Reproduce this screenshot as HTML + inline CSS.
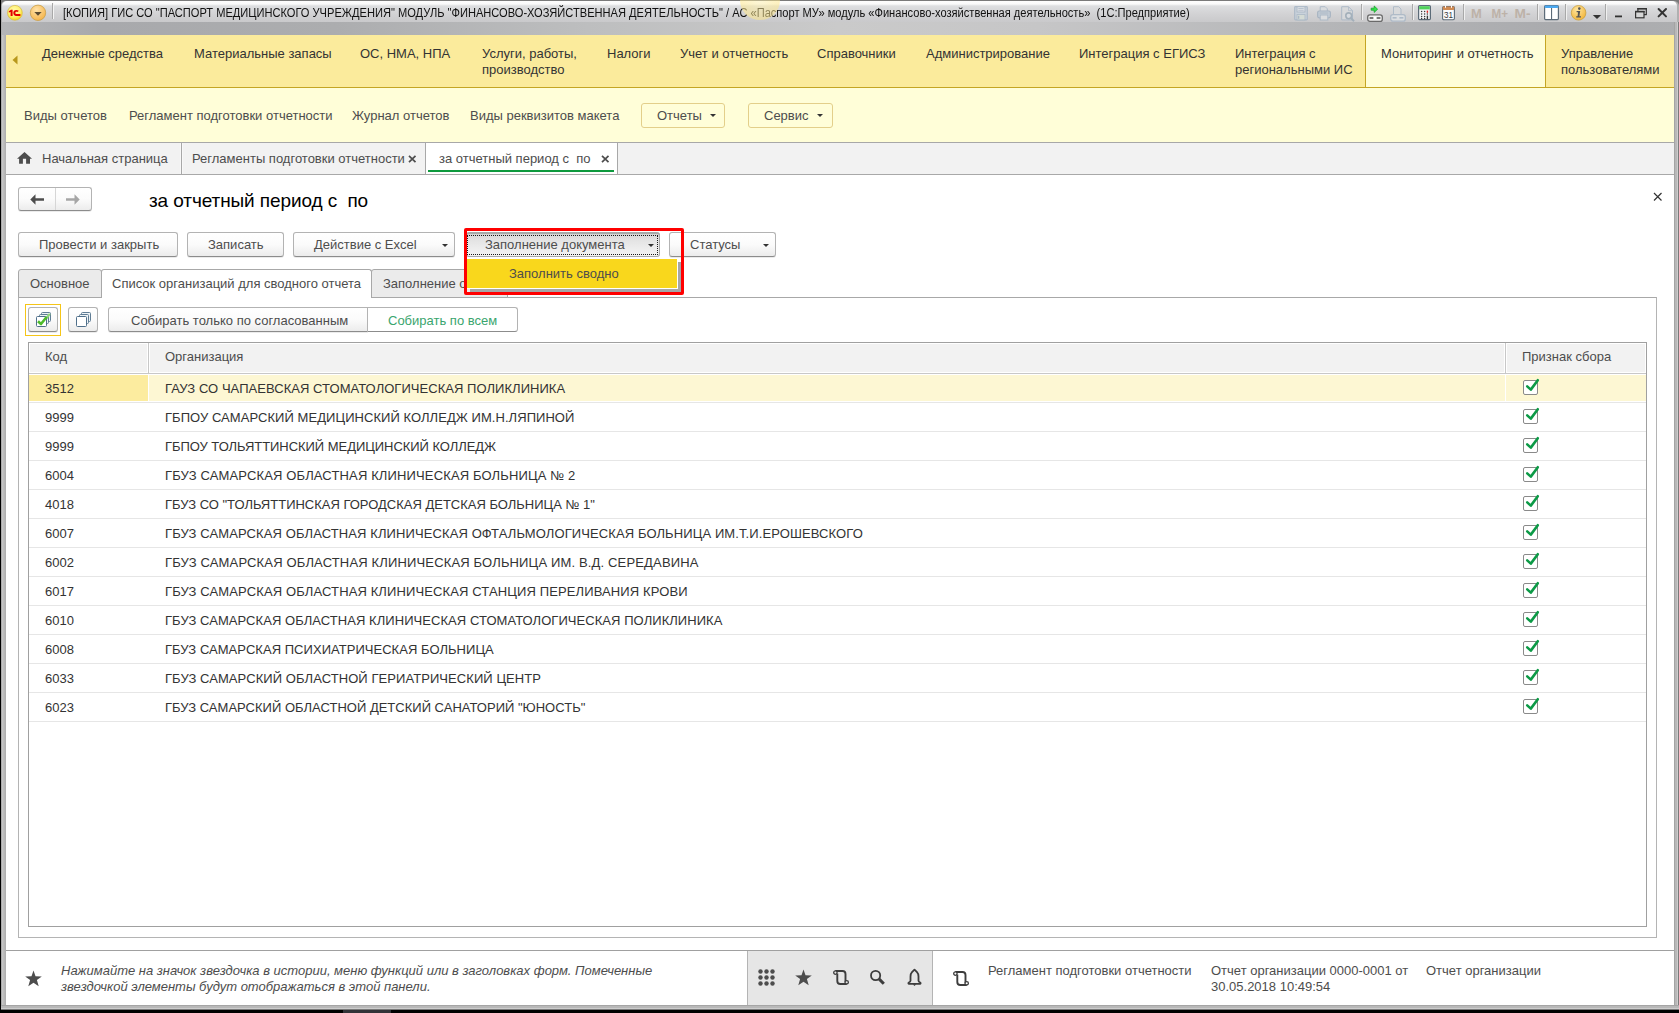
<!DOCTYPE html>
<html><head><meta charset="utf-8">
<style>
*{box-sizing:border-box}
html,body{margin:0;padding:0}
body{width:1679px;height:1013px;position:relative;overflow:hidden;background:#000;font-family:"Liberation Sans",sans-serif;font-size:13px;color:#4d4d4d}
.a{position:absolute}
.t{position:absolute;white-space:nowrap;font-size:13px;line-height:16px}
svg{position:absolute;overflow:visible}
#topline{left:1px;top:0;width:1678px;height:24px;background:#7a7a7a}
#frame{left:1px;top:1px;width:1678px;height:1008px;background:linear-gradient(90deg,#8a8a8a 0,#cdcdcd 1px,#bebebe 2px,#bebebe 3px,#b0b0b0 4px,#b0b0b0 5px);border-radius:5px 5px 0 0}
#frameR{left:1674px;top:22px;width:5px;height:987px;background:linear-gradient(90deg,#a4a4a4 0,#a4a4a4 1px,#b8b8b8 1px,#b8b8b8 3px,#cdcdcd 3px,#cdcdcd 4px,#7a7a7a 4px)}
#titlebar{left:2px;top:1px;width:1675px;height:21px;background:linear-gradient(#fdfdfd 0,#fafafa 3px,#dddee0 5px,#d4d4d6 55%,#c9c9cb 100%);border-radius:5px 5px 0 0}
#band{left:2px;top:22px;width:1672px;height:13px;background:linear-gradient(90deg,#b4b5b7 0,#a8a9ac 6%,#acadaf 20%,#bdbebf 35%,#cacaca 50%,#c6c6c7 62%,#b6b7b9 78%,#a9aaad 94%,#adaeb0 100%)}
#bottomframe{left:1px;top:1005px;width:1678px;height:5px;background:linear-gradient(#a5a5a5 0,#a5a5a5 1px,#b8b8b8 1px,#b8b8b8 3px,#cdcdcd 3px,#cdcdcd 4px,#7a7a7a 4px)}
#sections{left:6px;top:35px;width:1668px;height:53px;background:#fbeb9c;border-bottom:1px solid #c4a524}
#funcs{left:6px;top:88px;width:1668px;height:55px;background:#fffed8;border-bottom:1px solid #a8a8a8}
#tabs{left:6px;top:143px;width:1668px;height:32px;background:#f2f2f2;border-bottom:1px solid #a8a8a8}
#content{left:6px;top:175px;width:1668px;height:776px;background:#fff}
#footer{left:6px;top:950px;width:1668px;height:55px;background:#fff;border-top:1px solid #a0a0a0}
.sep{position:absolute;top:3px;width:2px;height:16px;border-left:1px solid #a8a8a8;border-right:1px solid #f4f4f4}
.sec{color:#333}
.fbtn{position:absolute;top:103px;height:25px;border:1px solid #e3cf8a;border-radius:3px;background:#fffed8}
.tri{position:absolute;width:0;height:0;border-left:3px solid transparent;border-right:3px solid transparent;border-top:3px solid #333}
.cb{position:absolute;width:15px;height:15px;border:1px solid #8a8a8a;border-radius:2px;background:#fff}
.r{color:#333}
.btn{position:absolute;height:25px;border:1px solid #b3b3b3;border-bottom-color:#8c8c8c;border-radius:3px;background:linear-gradient(#ffffff,#fbfbfb 50%,#ececec);box-shadow:0 1px 0 rgba(0,0,0,0.08)}
</style></head><body>
<div class="a" id="topline"></div>
<div class="a" id="frame"></div>
<div class="a" id="frameR"></div>
<div class="a" id="titlebar"></div>
<div class="a" id="band"></div>
<div class="a" id="bottomframe"></div>
<div class="a" id="sections"></div>
<div class="a" id="funcs"></div>
<div class="a" id="tabs"></div>
<div class="a" id="content"></div>
<div class="a" id="footer"></div>
<div class="a" style="left:343px;top:1010px;width:48px;height:3px;background:#323338"></div>

<!-- TITLEBAR -->
<svg style="left:0;top:0" width="60" height="26">
 <defs>
  <radialGradient id="g1c" cx="0.45" cy="0.35" r="0.7"><stop offset="0" stop-color="#fffbb0"/><stop offset="0.6" stop-color="#fff06a"/><stop offset="1" stop-color="#f3d200"/></radialGradient>
  <radialGradient id="gdd" cx="0.4" cy="0.3" r="0.75"><stop offset="0" stop-color="#ffe2a8"/><stop offset="1" stop-color="#f5b347"/></radialGradient>
 </defs>
 <circle cx="14.9" cy="12.8" r="7.4" fill="url(#g1c)" stroke="#d8bd52" stroke-width="0.8"/>
 <path d="M8.8 11.2 L11 9.8 L12.6 9.8 L12.6 15.9 L10.6 15.9 L10.6 12 L8.8 12.6 Z" fill="#e30000"/>
 <path d="M18.6 10.6 C16.2 9.3 13.2 10 13.3 12.9 C13.4 15.2 15.3 16 17.3 16 L20.4 16 L20.4 14.1 L16.8 14.1 C15.8 14.1 15.3 13.6 15.3 12.9 C15.3 11.6 16.8 11.3 18 12.1 Z" fill="#e30000"/>
 <circle cx="38" cy="12.8" r="7.7" fill="url(#gdd)" stroke="#c9a04c" stroke-width="0.8"/>
 <path d="M34.3 11.9 L41.7 11.9 L38 15.8 Z" fill="#5a4a30"/>
</svg>
<div class="sep" style="left:52px"></div>
<div class="t" style="left:63px;top:6px;font-size:12px;line-height:14px;color:#111;transform:scaleX(0.9245);transform-origin:0 0">[КОПИЯ] ГИС СО "ПАСПОРТ МЕДИЦИНСКОГО УЧРЕЖДЕНИЯ" МОДУЛЬ "ФИНАНСОВО-ХОЗЯЙСТВЕННАЯ ДЕЯТЕЛЬНОСТЬ" / АС «Паспорт МУ» модуль «Финансово-хозяйственная деятельность»&nbsp; (1С:Предприятие)</div>

<!-- TITLEBAR RIGHT ICONS -->
<svg style="left:1290px;top:3px" width="390" height="20">
 <!-- save -->
 <g transform="translate(4,3)" opacity="0.9">
  <rect x="0.7" y="0.7" width="12.6" height="13.2" rx="0.8" fill="#c9d2dc" stroke="#a9b7c6" stroke-width="1.2"/>
  <rect x="3" y="0.7" width="8" height="5.3" fill="#e1e4e8" stroke="#a9b7c6" stroke-width="1"/>
  <path d="M4.3 2.5 H9.7 M4.3 4.3 H9.7" stroke="#a9b7c6" stroke-width="0.8"/>
  <rect x="3" y="8.5" width="8" height="5.4" fill="#d5ddd6" stroke="#a9b7c6" stroke-width="0.8"/>
  <rect x="4" y="9.8" width="1.3" height="3" fill="#a9b7c6"/>
 </g>
 <!-- print -->
 <g transform="translate(27,3)" opacity="0.9">
  <path d="M3.2 5 V0.7 H8.2 L10.3 2.8 V5" fill="#dadde0" stroke="#a9b7c6" stroke-width="1"/>
  <rect x="0.7" y="5" width="12.6" height="6.8" rx="1.5" fill="#c4ced8" stroke="#a2b0bf" stroke-width="1.2"/>
  <path d="M2.5 7 H11.5" stroke="#a2b0bf" stroke-width="0.8"/>
  <rect x="3.2" y="9" width="7.6" height="5" fill="#dddfe1" stroke="#a9b7c6" stroke-width="1"/>
 </g>
 <!-- preview -->
 <g transform="translate(51,3)" opacity="0.9">
  <path d="M0.7 13.9 V0.7 H7.5 L11.5 4.7 V13.9 Z" fill="#d8dadc" stroke="#a9b7c6" stroke-width="1"/>
  <path d="M7.5 0.7 V4.7 H11.5" fill="none" stroke="#a9b7c6" stroke-width="0.8"/>
  <circle cx="7.7" cy="9.8" r="2.9" fill="#d8dde2" stroke="#9fadb8" stroke-width="1.6"/>
  <path d="M9.8 11.9 L13 15.2" stroke="#9fadb8" stroke-width="2"/>
 </g>
 <rect x="71" y="1" width="1" height="16" fill="#a8a8a8"/><rect x="72" y="1" width="1" height="16" fill="#f0f0f0"/>
 <!-- link green -->
 <g transform="translate(77,2)">
  <path d="M4.2 3.2 H7.2 V1 L10.6 4.2 L7.2 7.4 V5.2 H4.2 Z" fill="#2ee84a" stroke="#18a028" stroke-width="0.8" stroke-linejoin="round"/>
  <rect x="0.7" y="9.8" width="14.6" height="6.6" rx="2.2" fill="#f2f2f2" stroke="#6a6a6a" stroke-width="1.3"/>
  <rect x="2.6" y="12.2" width="4" height="1.6" fill="#5a5a5a"/>
  <rect x="9.4" y="12.2" width="4" height="1.6" fill="#5a5a5a"/>
  <rect x="6.6" y="11.6" width="2.8" height="2.6" fill="#fff"/>
 </g>
 <!-- link disabled -->
 <g transform="translate(100,3)" opacity="0.85">
  <path d="M3.5 8.5 V0.7 H8.7 L11 3 V8.5" fill="#d9dbdd" stroke="#a9b7c6" stroke-width="1"/>
  <rect x="0.7" y="8.6" width="14.6" height="6.6" rx="2.2" fill="#dfe2e5" stroke="#a9b7c6" stroke-width="1.3"/>
  <rect x="2.6" y="11" width="4" height="1.6" fill="#a9b7c6"/>
  <rect x="9.4" y="11" width="4" height="1.6" fill="#a9b7c6"/>
 </g>
 <rect x="122" y="1" width="1" height="16" fill="#a8a8a8"/><rect x="123" y="1" width="1" height="16" fill="#f0f0f0"/>
 <!-- calculator -->
 <g transform="translate(128,2)">
  <rect x="0.6" y="0.6" width="11.8" height="14" rx="1" fill="#f4f6f8" stroke="#5c6b78" stroke-width="1.2"/>
  <rect x="1.2" y="1.2" width="10.6" height="3.2" fill="#4fd25a"/>
  <g fill="#3a3a3a"><circle cx="3.6" cy="6.6" r="0.75"/><circle cx="6.6" cy="6.6" r="0.75"/><circle cx="3.6" cy="9" r="0.75"/><circle cx="6.6" cy="9" r="0.75"/><circle cx="9.4" cy="9" r="0.75"/><circle cx="3.6" cy="11.4" r="0.75"/><circle cx="6.6" cy="11.4" r="0.75"/><circle cx="3.6" cy="13.6" r="0.75"/><circle cx="6.6" cy="13.6" r="0.75"/><rect x="8.7" y="10.6" width="1.4" height="3.6"/></g>
  <rect x="8.7" y="5.6" width="1.4" height="2.2" fill="#e02020"/>
 </g>
 <!-- calendar -->
 <g transform="translate(152,2)">
  <rect x="0.6" y="1.6" width="11.8" height="13.2" rx="1.2" fill="#fbfcfd" stroke="#5c6b78" stroke-width="1.1"/>
  <rect x="0.6" y="1.6" width="11.8" height="3.4" rx="1" fill="#d08a52"/>
  <rect x="3" y="0.6" width="1" height="2.2" fill="#fff"/><rect x="9" y="0.6" width="1" height="2.2" fill="#fff"/>
  <text x="6.5" y="13.4" font-family="Liberation Sans" font-size="9.5" text-anchor="middle" fill="#3a3a3a" textLength="9" lengthAdjust="spacingAndGlyphs">31</text>
 </g>
 <rect x="173" y="1" width="1" height="16" fill="#a8a8a8"/><rect x="174" y="1" width="1" height="16" fill="#f0f0f0"/>
 <!-- M M+ M- -->
 <g fill="#bdb2a8" font-family="Liberation Sans" font-weight="bold" font-size="13">
  <text x="181" y="14.6">M</text>
  <text x="201.5" y="14.6" textLength="16.5" lengthAdjust="spacingAndGlyphs">M+</text>
  <text x="224.5" y="14.6" textLength="16" lengthAdjust="spacingAndGlyphs">M-</text>
 </g>
 <rect x="247" y="1" width="1" height="16" fill="#a8a8a8"/><rect x="248" y="1" width="1" height="16" fill="#f0f0f0"/>
 <!-- panel -->
 <g transform="translate(254,2)">
  <rect x="0.6" y="0.6" width="13.8" height="14" rx="1" fill="#fff" stroke="#5c6b78" stroke-width="1.2"/>
  <rect x="0.6" y="0.6" width="13.8" height="2.4" rx="1" fill="#4aa8f0"/>
  <rect x="7" y="3" width="1.1" height="11.6" fill="#5c6b78"/>
 </g>
 <rect x="275" y="1" width="1" height="16" fill="#a8a8a8"/><rect x="276" y="1" width="1" height="16" fill="#f0f0f0"/>
 <!-- info -->
 <defs><radialGradient id="ginf" cx="0.4" cy="0.3" r="0.8"><stop offset="0" stop-color="#ffe6a0"/><stop offset="1" stop-color="#f0b030"/></radialGradient></defs>
 <circle cx="288.6" cy="9.8" r="7.3" fill="url(#ginf)" stroke="#c9a040" stroke-width="0.8"/>
 <circle cx="289.3" cy="5.6" r="1.3" fill="#555"/>
 <path d="M286.6 8 H290.2 L289.4 13.2 H291 V14.4 H286.2 V13.2 H287.6 L288 9.2 H286.6 Z" fill="#555"/>
 <path d="M302.8 12 L311.2 12 L307 16 Z" fill="#333"/>
 <rect x="315" y="1" width="1" height="16" fill="#a8a8a8"/><rect x="316" y="1" width="1" height="16" fill="#f0f0f0"/>
 <!-- min / restore / close -->
 <rect x="325" y="12.5" width="7" height="1.8" fill="#333"/>
 <rect x="347.9" y="5.6" width="8.4" height="6" fill="none" stroke="#333" stroke-width="1.2"/>
 <rect x="345.6" y="8.5" width="8.4" height="6.3" fill="#d6d6d6" stroke="#333" stroke-width="1.2"/>
 <rect x="345" y="7.9" width="9.6" height="1.5" fill="#333"/>
 <rect x="347.3" y="5" width="9.6" height="1.5" fill="#333"/>
 <path d="M368.6 6 L376 13.4 M376 6 L368.6 13.4" stroke="#333" stroke-width="2" stroke-linecap="round"/>
</svg>
<div class="a" style="left:740px;top:-20px;width:40px;height:40px;border-radius:50%;background:radial-gradient(circle,rgba(255,240,170,0.45) 0,rgba(255,232,140,0.55) 70%,rgba(240,205,90,0.65) 100%)"></div>
<!-- SECTIONS -->
<svg style="left:12px;top:55px" width="6" height="10"><path d="M5.5 0.5 L0.5 5 L5.5 9.5 Z" fill="#b8981c"/></svg>
<div class="a" style="left:1365px;top:35px;width:181px;height:53px;background:#fffed8;border-left:1px solid #c4a524;border-right:1px solid #c4a524;border-bottom:1px solid #c4a524"></div>
<div class="t sec" style="left:42px;top:46px">Денежные средства</div>
<div class="t sec" style="left:194px;top:46px">Материальные запасы</div>
<div class="t sec" style="left:360px;top:46px">ОС, НМА, НПА</div>
<div class="t sec" style="left:482px;top:46px">Услуги, работы,<br>производство</div>
<div class="t sec" style="left:607px;top:46px">Налоги</div>
<div class="t sec" style="left:680px;top:46px">Учет и отчетность</div>
<div class="t sec" style="left:817px;top:46px">Справочники</div>
<div class="t sec" style="left:926px;top:46px">Администрирование</div>
<div class="t sec" style="left:1079px;top:46px">Интеграция с ЕГИСЗ</div>
<div class="t sec" style="left:1235px;top:46px">Интеграция с<br>региональными ИС</div>
<div class="t sec" style="left:1381px;top:46px">Мониторинг и отчетность</div>
<div class="t sec" style="left:1561px;top:46px">Управление<br>пользователями</div>

<!-- FUNCTIONS -->
<div class="t" style="left:24px;top:108px">Виды отчетов</div>
<div class="t" style="left:129px;top:108px">Регламент подготовки отчетности</div>
<div class="t" style="left:352px;top:108px">Журнал отчетов</div>
<div class="t" style="left:470px;top:108px">Виды реквизитов макета</div>
<div class="fbtn" style="left:641px;width:84px"></div>
<div class="t" style="left:657px;top:108px">Отчеты</div>
<div class="tri" style="left:710px;top:114px"></div>
<div class="fbtn" style="left:748px;width:85px"></div>
<div class="t" style="left:764px;top:108px">Сервис</div>
<div class="tri" style="left:817px;top:114px"></div>

<!-- OPEN TABS -->
<svg style="left:17px;top:152px" width="15" height="12"><path d="M0 6.7 L7.5 0 L15 6.7 L13 6.7 L13 11.8 L9.1 11.8 L9.1 6.7 L5.9 6.7 L5.9 11.8 L2.1 11.8 L2.1 6.7 Z" fill="#4d4d4d"/></svg>
<div class="t" style="left:42px;top:151px">Начальная страница</div>
<div class="a" style="left:180px;top:143px;width:3px;height:31px;border-left:1px solid #f8f8f8;border-right:1px solid #f8f8f8;background:#a8a8a8"></div>
<div class="t" style="left:192px;top:151px">Регламенты подготовки отчетности</div>
<svg style="left:408px;top:155px" width="9" height="8"><path d="M1 0.8 L7.5 7.2 M7.5 0.8 L1 7.2" stroke="#4d4d4d" stroke-width="1.7"/></svg>
<div class="a" style="left:425px;top:143px;width:193px;height:31px;background:#fff;border-left:1px solid #a8a8a8;border-right:1px solid #a8a8a8"></div>
<div class="a" style="left:428px;top:170px;width:186px;height:2px;background:#0e9a3e"></div>
<div class="t" style="left:439px;top:151px">за отчетный период с&nbsp; по</div>
<svg style="left:601px;top:155px" width="9" height="8"><path d="M1 0.8 L7.5 7.2 M7.5 0.8 L1 7.2" stroke="#4d4d4d" stroke-width="1.7"/></svg>

<!-- FORM HEADER -->
<div class="btn" style="left:18px;top:187px;width:74px;height:24px"></div>
<div class="a" style="left:55px;top:188px;width:1px;height:22px;background:#d6d6d6"></div>
<svg style="left:30px;top:194px" width="15" height="11"><path d="M0.3 5.5 L5.5 0.3 L5.5 4.2 L14 4.2 L14 6.8 L5.5 6.8 L5.5 10.7 Z" fill="#4d4d4d"/></svg>
<svg style="left:66px;top:194px" width="15" height="11"><path d="M13.7 5.5 L8.5 0.3 L8.5 4.2 L0 4.2 L0 6.8 L8.5 6.8 L8.5 10.7 Z" fill="#a6a6a6"/></svg>
<div class="t" style="left:149px;top:190px;font-size:19px;line-height:22px;color:#000;letter-spacing:-0.1px">за отчетный период с&nbsp; по</div>
<svg style="left:1653px;top:192px" width="10" height="10"><path d="M1 1 L8.5 8.5 M8.5 1 L1 8.5" stroke="#333" stroke-width="1.2"/></svg>

<!-- COMMAND BAR -->
<div class="btn" style="left:18px;top:232px;width:160px"></div>
<div class="t" style="left:39px;top:237px">Провести и закрыть</div>
<div class="btn" style="left:187px;top:232px;width:97px"></div>
<div class="t" style="left:208px;top:237px">Записать</div>
<div class="btn" style="left:293px;top:232px;width:162px"></div>
<div class="t" style="left:314px;top:237px">Действие с Excel</div>
<div class="tri" style="left:442px;top:244px"></div>
<div class="btn" style="left:669px;top:232px;width:107px"></div>
<div class="t" style="left:690px;top:237px">Статусы</div>
<div class="tri" style="left:763px;top:244px"></div>

<!-- TABS -->
<div class="a" style="left:18px;top:297px;width:1639px;height:641px;border:1px solid #b4b4b4;border-top:1px solid #a8a8a8"></div>
<div class="a" style="left:18px;top:269px;width:84px;height:29px;background:#ebebeb;border:1px solid #a8a8a8;border-radius:3px 3px 0 0"></div>
<div class="a" style="left:371px;top:269px;width:137px;height:29px;background:#ebebeb;border:1px solid #a8a8a8;border-radius:3px 3px 0 0"></div>
<div class="a" style="left:101px;top:269px;width:271px;height:29px;background:#fff;border:1px solid #a8a8a8;border-bottom:none;border-radius:3px 3px 0 0"></div>
<div class="t" style="left:30px;top:276px">Основное</div>
<div class="t" style="left:112px;top:276px">Список организаций для сводного отчета</div>
<div class="t" style="left:383px;top:276px">Заполнение отчета</div>

<!-- TOOLBAR -->
<div class="a" style="left:25px;top:304px;width:36px;height:32px;border:1px solid #f5c518"></div>
<div class="btn" style="left:28px;top:307px;width:30px"></div>
<div class="btn" style="left:68px;top:307px;width:30px"></div>
<svg style="left:36px;top:312px" width="16" height="16">
 <rect x="5.5" y="0.5" width="9" height="9" rx="1" fill="#eef3f6" stroke="#5f7d95"/>
 <rect x="3.5" y="2.5" width="9" height="9" rx="1" fill="#eef3f6" stroke="#5f7d95"/>
 <path d="M9 8 L13.8 1.8" fill="none" stroke="#8fd878" stroke-width="2.2"/>
 <rect x="0.5" y="4.5" width="10" height="10" rx="1" fill="#fff" stroke="#4f6f8a"/>
 <path d="M2 9.2 L5 12 L10.6 5" fill="none" stroke="#4dbb2c" stroke-width="2.6" stroke-linejoin="round"/>
</svg>
<svg style="left:76px;top:312px" width="16" height="16">
 <rect x="5.5" y="0.5" width="9" height="9" rx="1" fill="#eef3f6" stroke="#5f7d95"/>
 <rect x="3.5" y="2.5" width="9" height="9" rx="1" fill="#eef3f6" stroke="#5f7d95"/>
 <rect x="0.5" y="4.5" width="10" height="10" rx="1" fill="#fff" stroke="#4f6f8a"/>
</svg>
<div class="btn" style="left:108px;top:307px;width:260px;border-radius:3px 0 0 3px"></div>
<div class="a" style="left:367px;top:307px;width:151px;height:25px;background:#fff;border:1px solid #b3b3b3;border-bottom-color:#8c8c8c;border-radius:0 3px 3px 0"></div>
<div class="t" style="left:131px;top:313px">Собирать только по согласованным</div>
<div class="t" style="left:388px;top:313px;color:#3aa56e">Собирать по всем</div>

<!-- TABLE -->
<div class="a" style="left:28px;top:342px;width:1619px;height:585px;border:1px solid #a0a0a0;background:#fff"></div>
<div class="a" style="left:29px;top:343px;width:1617px;height:30px;background:#f2f2f2;border:1px solid #fff"></div>
<div class="a" style="left:29px;top:373px;width:1617px;height:1px;background:#c8c8c8"></div>
<div class="a" style="left:147px;top:343px;width:3px;height:30px;background:#c8c8c8;border-left:1px solid #fff;border-right:1px solid #fff"></div>
<div class="a" style="left:1504px;top:343px;width:3px;height:30px;background:#c8c8c8;border-left:1px solid #fff;border-right:1px solid #fff"></div>
<div class="t" style="left:45px;top:349px">Код</div>
<div class="t" style="left:165px;top:349px">Организация</div>
<div class="t" style="left:1522px;top:349px">Признак сбора</div>
<div class="a" style="left:29px;top:375px;width:119px;height:26px;background:#fcec9f"></div>
<div class="a" style="left:149px;top:375px;width:1497px;height:26px;background:#fdf7d3"></div>
<div class="a" style="left:1505px;top:375px;width:1px;height:26px;background:#fff"></div>
<div class="a" style="left:29px;top:402px;width:1617px;height:1px;background:#e6e6e6"></div>
<div class="t r" style="left:45px;top:381px">3512</div>
<div class="t r" style="left:165px;top:381px;letter-spacing:0.043px">ГАУЗ СО ЧАПАЕВСКАЯ СТОМАТОЛОГИЧЕСКАЯ ПОЛИКЛИНИКА</div>
<div class="cb" style="left:1523px;top:380px"></div>
<svg style="left:1525px;top:378px" width="14" height="14"><path d="M2.2 8.4 L5.8 11.6 L12.8 2.2" fill="none" stroke="#0c9a46" stroke-width="2.6" stroke-linecap="round" stroke-linejoin="round"/></svg>
<div class="a" style="left:29px;top:431px;width:1617px;height:1px;background:#e6e6e6"></div>
<div class="t r" style="left:45px;top:410px">9999</div>
<div class="t r" style="left:165px;top:410px;letter-spacing:0.057px">ГБПОУ САМАРСКИЙ МЕДИЦИНСКИЙ КОЛЛЕДЖ ИМ.Н.ЛЯПИНОЙ</div>
<div class="cb" style="left:1523px;top:409px"></div>
<svg style="left:1525px;top:407px" width="14" height="14"><path d="M2.2 8.4 L5.8 11.6 L12.8 2.2" fill="none" stroke="#0c9a46" stroke-width="2.6" stroke-linecap="round" stroke-linejoin="round"/></svg>
<div class="a" style="left:29px;top:460px;width:1617px;height:1px;background:#e6e6e6"></div>
<div class="t r" style="left:45px;top:439px">9999</div>
<div class="t r" style="left:165px;top:439px;letter-spacing:-0.047px">ГБПОУ ТОЛЬЯТТИНСКИЙ МЕДИЦИНСКИЙ КОЛЛЕДЖ</div>
<div class="cb" style="left:1523px;top:438px"></div>
<svg style="left:1525px;top:436px" width="14" height="14"><path d="M2.2 8.4 L5.8 11.6 L12.8 2.2" fill="none" stroke="#0c9a46" stroke-width="2.6" stroke-linecap="round" stroke-linejoin="round"/></svg>
<div class="a" style="left:29px;top:489px;width:1617px;height:1px;background:#e6e6e6"></div>
<div class="t r" style="left:45px;top:468px">6004</div>
<div class="t r" style="left:165px;top:468px;letter-spacing:0.140px">ГБУЗ САМАРСКАЯ ОБЛАСТНАЯ КЛИНИЧЕСКАЯ БОЛЬНИЦА № 2</div>
<div class="cb" style="left:1523px;top:467px"></div>
<svg style="left:1525px;top:465px" width="14" height="14"><path d="M2.2 8.4 L5.8 11.6 L12.8 2.2" fill="none" stroke="#0c9a46" stroke-width="2.6" stroke-linecap="round" stroke-linejoin="round"/></svg>
<div class="a" style="left:29px;top:518px;width:1617px;height:1px;background:#e6e6e6"></div>
<div class="t r" style="left:45px;top:497px">4018</div>
<div class="t r" style="left:165px;top:497px;letter-spacing:-0.006px">ГБУЗ СО "ТОЛЬЯТТИНСКАЯ ГОРОДСКАЯ ДЕТСКАЯ БОЛЬНИЦА № 1"</div>
<div class="cb" style="left:1523px;top:496px"></div>
<svg style="left:1525px;top:494px" width="14" height="14"><path d="M2.2 8.4 L5.8 11.6 L12.8 2.2" fill="none" stroke="#0c9a46" stroke-width="2.6" stroke-linecap="round" stroke-linejoin="round"/></svg>
<div class="a" style="left:29px;top:547px;width:1617px;height:1px;background:#e6e6e6"></div>
<div class="t r" style="left:45px;top:526px">6007</div>
<div class="t r" style="left:165px;top:526px;letter-spacing:0.104px">ГБУЗ САМАРСКАЯ ОБЛАСТНАЯ КЛИНИЧЕСКАЯ ОФТАЛЬМОЛОГИЧЕСКАЯ БОЛЬНИЦА ИМ.Т.И.ЕРОШЕВСКОГО</div>
<div class="cb" style="left:1523px;top:525px"></div>
<svg style="left:1525px;top:523px" width="14" height="14"><path d="M2.2 8.4 L5.8 11.6 L12.8 2.2" fill="none" stroke="#0c9a46" stroke-width="2.6" stroke-linecap="round" stroke-linejoin="round"/></svg>
<div class="a" style="left:29px;top:576px;width:1617px;height:1px;background:#e6e6e6"></div>
<div class="t r" style="left:45px;top:555px">6002</div>
<div class="t r" style="left:165px;top:555px;letter-spacing:0.155px">ГБУЗ САМАРСКАЯ ОБЛАСТНАЯ КЛИНИЧЕСКАЯ БОЛЬНИЦА ИМ. В.Д. СЕРЕДАВИНА</div>
<div class="cb" style="left:1523px;top:554px"></div>
<svg style="left:1525px;top:552px" width="14" height="14"><path d="M2.2 8.4 L5.8 11.6 L12.8 2.2" fill="none" stroke="#0c9a46" stroke-width="2.6" stroke-linecap="round" stroke-linejoin="round"/></svg>
<div class="a" style="left:29px;top:605px;width:1617px;height:1px;background:#e6e6e6"></div>
<div class="t r" style="left:45px;top:584px">6017</div>
<div class="t r" style="left:165px;top:584px;letter-spacing:0.121px">ГБУЗ САМАРСКАЯ ОБЛАСТНАЯ КЛИНИЧЕСКАЯ СТАНЦИЯ ПЕРЕЛИВАНИЯ КРОВИ</div>
<div class="cb" style="left:1523px;top:583px"></div>
<svg style="left:1525px;top:581px" width="14" height="14"><path d="M2.2 8.4 L5.8 11.6 L12.8 2.2" fill="none" stroke="#0c9a46" stroke-width="2.6" stroke-linecap="round" stroke-linejoin="round"/></svg>
<div class="a" style="left:29px;top:634px;width:1617px;height:1px;background:#e6e6e6"></div>
<div class="t r" style="left:45px;top:613px">6010</div>
<div class="t r" style="left:165px;top:613px;letter-spacing:0.058px">ГБУЗ САМАРСКАЯ ОБЛАСТНАЯ КЛИНИЧЕСКАЯ СТОМАТОЛОГИЧЕСКАЯ ПОЛИКЛИНИКА</div>
<div class="cb" style="left:1523px;top:612px"></div>
<svg style="left:1525px;top:610px" width="14" height="14"><path d="M2.2 8.4 L5.8 11.6 L12.8 2.2" fill="none" stroke="#0c9a46" stroke-width="2.6" stroke-linecap="round" stroke-linejoin="round"/></svg>
<div class="a" style="left:29px;top:663px;width:1617px;height:1px;background:#e6e6e6"></div>
<div class="t r" style="left:45px;top:642px">6008</div>
<div class="t r" style="left:165px;top:642px;letter-spacing:0.039px">ГБУЗ САМАРСКАЯ ПСИХИАТРИЧЕСКАЯ БОЛЬНИЦА</div>
<div class="cb" style="left:1523px;top:641px"></div>
<svg style="left:1525px;top:639px" width="14" height="14"><path d="M2.2 8.4 L5.8 11.6 L12.8 2.2" fill="none" stroke="#0c9a46" stroke-width="2.6" stroke-linecap="round" stroke-linejoin="round"/></svg>
<div class="a" style="left:29px;top:692px;width:1617px;height:1px;background:#e6e6e6"></div>
<div class="t r" style="left:45px;top:671px">6033</div>
<div class="t r" style="left:165px;top:671px;letter-spacing:0.070px">ГБУЗ САМАРСКИЙ ОБЛАСТНОЙ ГЕРИАТРИЧЕСКИЙ ЦЕНТР</div>
<div class="cb" style="left:1523px;top:670px"></div>
<svg style="left:1525px;top:668px" width="14" height="14"><path d="M2.2 8.4 L5.8 11.6 L12.8 2.2" fill="none" stroke="#0c9a46" stroke-width="2.6" stroke-linecap="round" stroke-linejoin="round"/></svg>
<div class="a" style="left:29px;top:721px;width:1617px;height:1px;background:#e6e6e6"></div>
<div class="t r" style="left:45px;top:700px">6023</div>
<div class="t r" style="left:165px;top:700px;letter-spacing:0.008px">ГБУЗ САМАРСКИЙ ОБЛАСТНОЙ ДЕТСКИЙ САНАТОРИЙ "ЮНОСТЬ"</div>
<div class="cb" style="left:1523px;top:699px"></div>
<svg style="left:1525px;top:697px" width="14" height="14"><path d="M2.2 8.4 L5.8 11.6 L12.8 2.2" fill="none" stroke="#0c9a46" stroke-width="2.6" stroke-linecap="round" stroke-linejoin="round"/></svg>
<!-- PRESSED BUTTON + POPUP -->
<div class="a" style="left:466px;top:232px;width:194px;height:25px;border:1px solid #a8a8a8;border-top:2px solid #a8a8a8;border-radius:3px;background:linear-gradient(#d6d6d6,#e4e4e4 30%,#eeeeee 70%,#f2f2f2)"></div>
<div class="a" style="left:467px;top:235px;width:191px;height:20px;border:1px dotted #1a1a1a"></div>
<div class="t" style="left:485px;top:237px">Заполнение документа</div>
<div class="tri" style="left:648px;top:244px"></div>
<div class="a" style="left:470px;top:262px;width:211px;height:30px;background:#a6a6a6;filter:blur(0.6px)"></div>
<div class="a" style="left:466px;top:258px;width:212px;height:31px;background:#f9d71c;border:1px solid #fff"></div>
<div class="t" style="left:509px;top:266px">Заполнить сводно</div>
<div class="a" style="left:464px;top:228px;width:220px;height:67px;border:3px solid #ff0000;border-radius:2px"></div>
<!-- FOOTER -->
<svg style="left:25px;top:970px" width="17" height="17"><path d="M8.5 0.5 L10.5 6.3 L16.8 6.4 L11.9 10.1 L13.7 16.3 L8.5 12.7 L3.3 16.3 L5.1 10.1 L0.2 6.4 L6.5 6.3 Z" fill="#4d4d4d"/></svg>
<div class="t" style="left:61px;top:963px;font-style:italic">Нажимайте на значок звездочка в истории, меню функций или в заголовках форм. Помеченные<br>звездочкой элементы будут отображаться в этой панели.</div>
<div class="a" style="left:747px;top:951px;width:186px;height:54px;background:#e6e6e6;border-left:1px solid #b4b4b4;border-right:1px solid #b4b4b4"></div>
<svg style="left:758px;top:969px" width="17" height="17" fill="#4d4d4d">
 <circle cx="2.5" cy="2.5" r="2.2"/><circle cx="8.5" cy="2.5" r="2.2"/><circle cx="14.5" cy="2.5" r="2.2"/>
 <circle cx="2.5" cy="8.5" r="2.2"/><circle cx="8.5" cy="8.5" r="2.2"/><circle cx="14.5" cy="8.5" r="2.2"/>
 <circle cx="2.5" cy="14.5" r="2.2"/><circle cx="8.5" cy="14.5" r="2.2"/><circle cx="14.5" cy="14.5" r="2.2"/>
</svg>
<svg style="left:795px;top:969px" width="17" height="17"><path d="M8.5 0.5 L10.5 6.3 L16.8 6.4 L11.9 10.1 L13.7 16.3 L8.5 12.7 L3.3 16.3 L5.1 10.1 L0.2 6.4 L6.5 6.3 Z" fill="#4d4d4d"/></svg>
<svg style="left:833px;top:970px" width="17" height="17"><path d="M2.3 1 H9.5 Q12.5 1 12.5 4 V12.3 M4.3 3.5 V11 Q4.3 14 7.3 14 H13.7" fill="none" stroke="#3d3d3d" stroke-width="1.9"/><circle cx="2.4" cy="2.6" r="1.7" fill="#e6e6e6" stroke="#3d3d3d" stroke-width="1.3"/><circle cx="13.7" cy="12.3" r="1.7" fill="#e6e6e6" stroke="#3d3d3d" stroke-width="1.3"/></svg>
<svg style="left:869px;top:969px" width="17" height="17"><circle cx="6.6" cy="6.5" r="4.6" fill="none" stroke="#3d3d3d" stroke-width="1.8"/><path d="M10.2 10.1 L14.8 14.7" stroke="#3d3d3d" stroke-width="3"/></svg>
<svg style="left:907px;top:969px" width="17" height="18"><path d="M7.5 0.6 L5 3.2 Q3.5 4.8 3.5 7.5 V11.8 Q3.5 13 1.7 13.5 Q0.9 14.4 2 14.8 H13 Q14.1 14.4 13.3 13.5 Q11.5 13 11.5 11.8 V7.5 Q11.5 4.8 10 3.2 Z" fill="none" stroke="#3d3d3d" stroke-width="1.8" stroke-linejoin="round"/><path d="M5.8 15.3 L7.5 17 L9.2 15.3 Z" fill="#3d3d3d"/></svg>
<svg style="left:953px;top:971px" width="17" height="17"><path d="M2.3 1 H9.5 Q12.5 1 12.5 4 V12.3 M4.3 3.5 V11 Q4.3 14 7.3 14 H13.7" fill="none" stroke="#3d3d3d" stroke-width="1.9"/><circle cx="2.4" cy="2.6" r="1.7" fill="#fff" stroke="#3d3d3d" stroke-width="1.3"/><circle cx="13.7" cy="12.3" r="1.7" fill="#fff" stroke="#3d3d3d" stroke-width="1.3"/></svg>
<div class="t" style="left:988px;top:963px">Регламент подготовки отчетности</div>
<div class="t" style="left:1211px;top:963px">Отчет организации 0000-0001 от<br>30.05.2018 10:49:54</div>
<div class="t" style="left:1426px;top:963px">Отчет организации</div>

</body></html>
